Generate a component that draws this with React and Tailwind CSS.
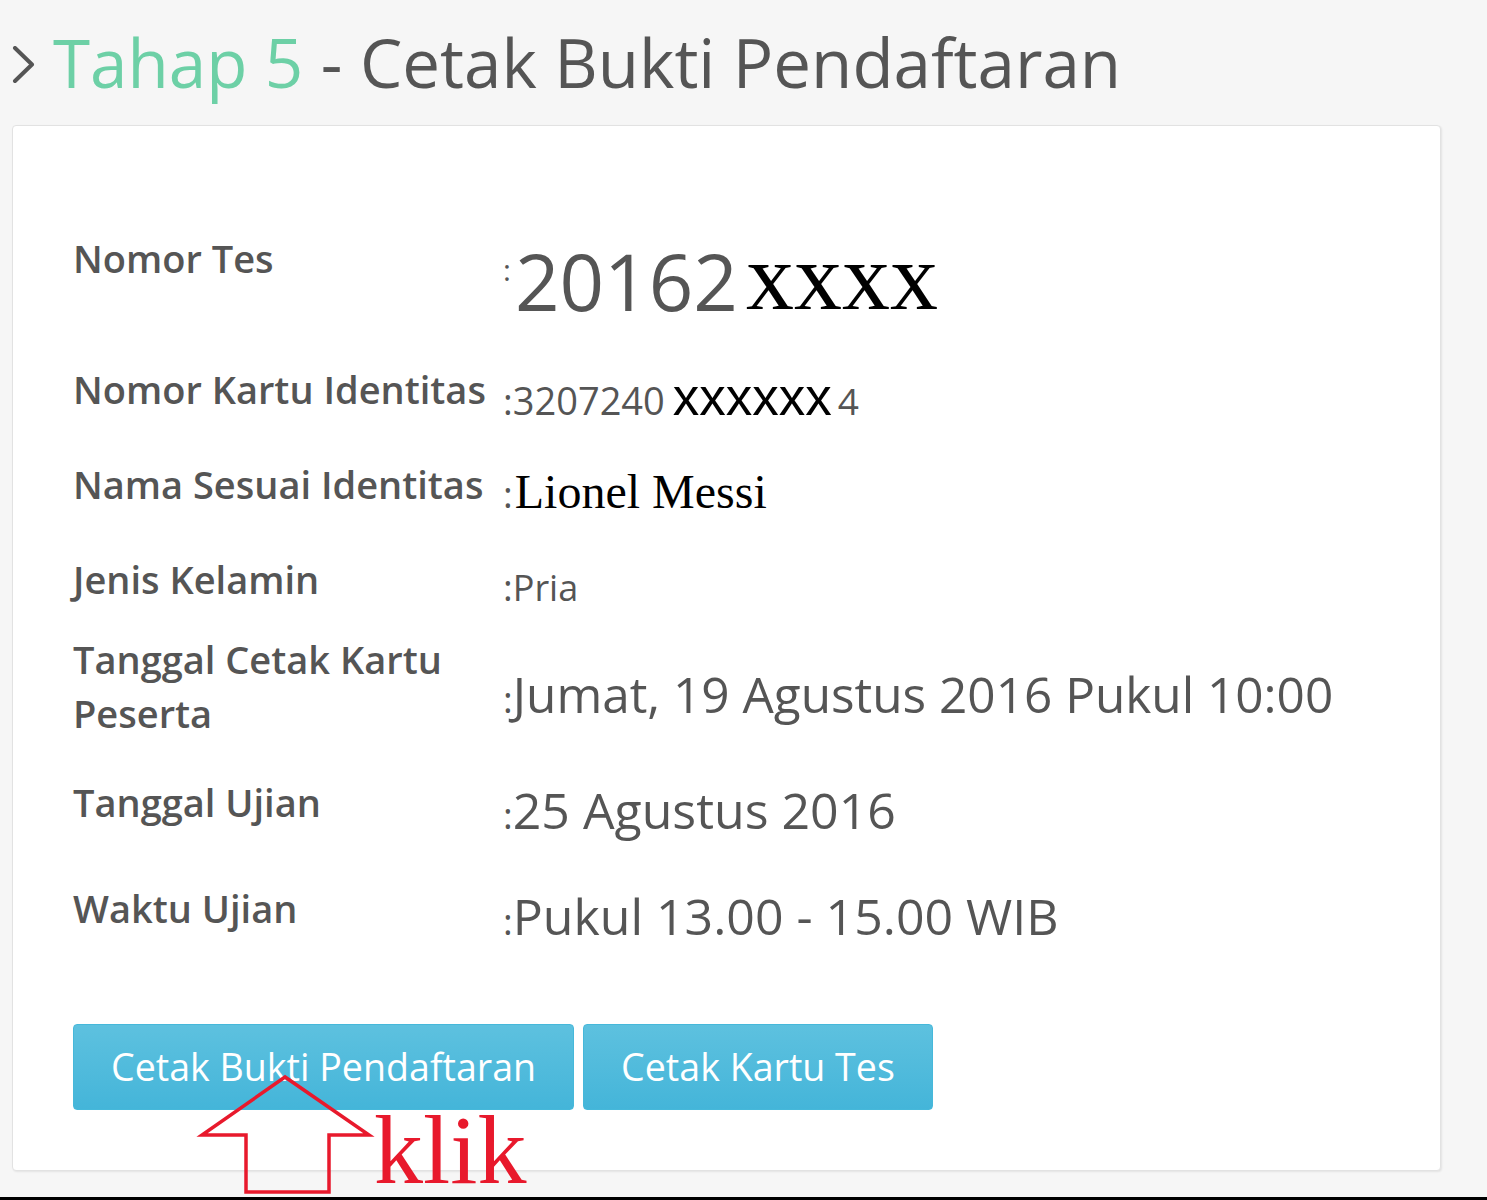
import React from 'react';

const sans = "font-['Open_Sans',sans-serif]";

const Label = ({ children, className = '' }) => (
    <div className={`w-[430px] shrink-0 text-[38px] font-semibold text-[#555] ${className}`}>{children}</div>
);

const Colon = ({ className = '' }) => (
    <span className={`text-[37px] text-[#555] ${className}`}>:</span>
);

const App = () => {
    return (
        <div className={`relative h-[1200px] w-[1487px] flex flex-col bg-[#f6f6f6] ${sans}`}>
            {/* Title */}
            <div className="h-[125px] flex items-start pt-[22px] pl-[12px]">
                <svg width="24" height="38" viewBox="0 0 24 38" className="mt-[24px]">
                    <path d="M3 2 L20 18.5 L3 35" fill="none" stroke="#555" strokeWidth="4" strokeLinecap="round" strokeLinejoin="round" />
                </svg>
                <h1 className="ml-[17px] text-[67.3px] leading-[80px] font-normal text-[#555]">
                    <span className="text-[#6dd0a6]">Tahap 5</span> - Cetak Bukti Pendaftaran
                </h1>
            </div>

            {/* Card */}
            <div className="ml-[12px] w-[1429px] bg-white border border-[#e2e2e2] rounded-[4px] shadow-[1px_1px_2px_rgba(0,0,0,0.08)] pt-[74px] pl-[60px] pb-[60px]">
                <div className="h-[145px] flex items-center">
                    <Label className="mb-[28px]">Nomor Tes</Label>
                    <div className="flex items-center mt-[16px]">
                        <span className="text-[30px] text-[#555] mb-[22px] mr-[4px]">:</span>
                        <span className="text-[78px] leading-none text-[#555]">20162</span>
                        <span className="text-[96px] leading-none text-black font-['Liberation_Serif',serif] ml-[8px] mb-[8px]">xxxx</span>
                    </div>
                </div>

                <div className="h-[96px] flex items-center">
                    <Label className="mb-[8px]">Nomor Kartu Identitas</Label>
                    <div className="flex items-baseline mt-[8px]">
                        <Colon />
                        <span className="text-[38px] text-[#555]">3207240</span>
                        <span className="text-[53px] text-black font-['Liberation_Sans',sans-serif] ml-[8px]">xxxxxx</span>
                        <span className="text-[37px] text-[#555] ml-[6px]">4</span>
                    </div>
                </div>

                <div className="h-[94px] flex items-center">
                    <Label className="mb-[8px]">Nama Sesuai Identitas</Label>
                    <div className="flex items-baseline mt-[8px]">
                        <Colon />
                        <span className="text-[48px] text-black font-['Liberation_Serif',serif] ml-[2px]">Lionel Messi</span>
                    </div>
                </div>

                <div className="h-[96px] flex items-center">
                    <Label className="mb-[8px]">Jenis Kelamin</Label>
                    <div className="flex items-baseline mt-[8px]">
                        <Colon />
                        <span className="text-[36px] text-[#555]">Pria</span>
                    </div>
                </div>

                <div className="h-[118px] flex items-center">
                    <Label className="mb-[8px] leading-[54px] pr-[20px]">Tanggal Cetak Kartu Peserta</Label>
                    <div className="flex items-baseline mt-[8px]">
                        <Colon />
                        <span className="text-[49.5px] text-[#555]">Jumat, 19 Agustus 2016 Pukul 10:00</span>
                    </div>
                </div>

                <div className="h-[114px] flex items-center">
                    <Label className="mb-[8px]">Tanggal Ujian</Label>
                    <div className="flex items-baseline mt-[8px]">
                        <Colon />
                        <span className="text-[50px] text-[#555]">25 Agustus 2016</span>
                    </div>
                </div>

                <div className="h-[98px] flex items-center">
                    <Label className="mb-[8px]">Waktu Ujian</Label>
                    <div className="flex items-baseline mt-[8px]">
                        <Colon />
                        <span className="text-[50px] text-[#555]">Pukul 13.00 - 15.00 WIB</span>
                    </div>
                </div>

                <div className="mt-[63px] flex gap-[9px]">
                    <button className="h-[86px] px-[37px] rounded-[4px] border border-[#46b8da] bg-gradient-to-b from-[#5dc1df] to-[#44b5d9] text-white text-[37.6px]">
                        Cetak Bukti Pendaftaran
                    </button>
                    <button className="h-[86px] px-[37px] rounded-[4px] border border-[#46b8da] bg-gradient-to-b from-[#5dc1df] to-[#44b5d9] text-white text-[37.6px]">
                        Cetak Kartu Tes
                    </button>
                </div>
            </div>

            <div className="flex-1" />
            <div className="h-[3px] bg-black" />

            {/* Annotation */}
            <svg className="absolute left-0 top-0 pointer-events-none" width="1487" height="1200">
                <polygon
                    points="285,1077 202,1135 246,1135 246,1192 329,1192 329,1135 369,1135"
                    fill="none"
                    stroke="#e8192c"
                    strokeWidth="3.5"
                    strokeLinejoin="miter"
                />
            </svg>
            <span className="absolute left-[374px] top-[1101px] text-[98px] leading-none text-[#e8192c] font-['Liberation_Serif',serif]">
                klik
            </span>
        </div>
    );
};

export default App;
